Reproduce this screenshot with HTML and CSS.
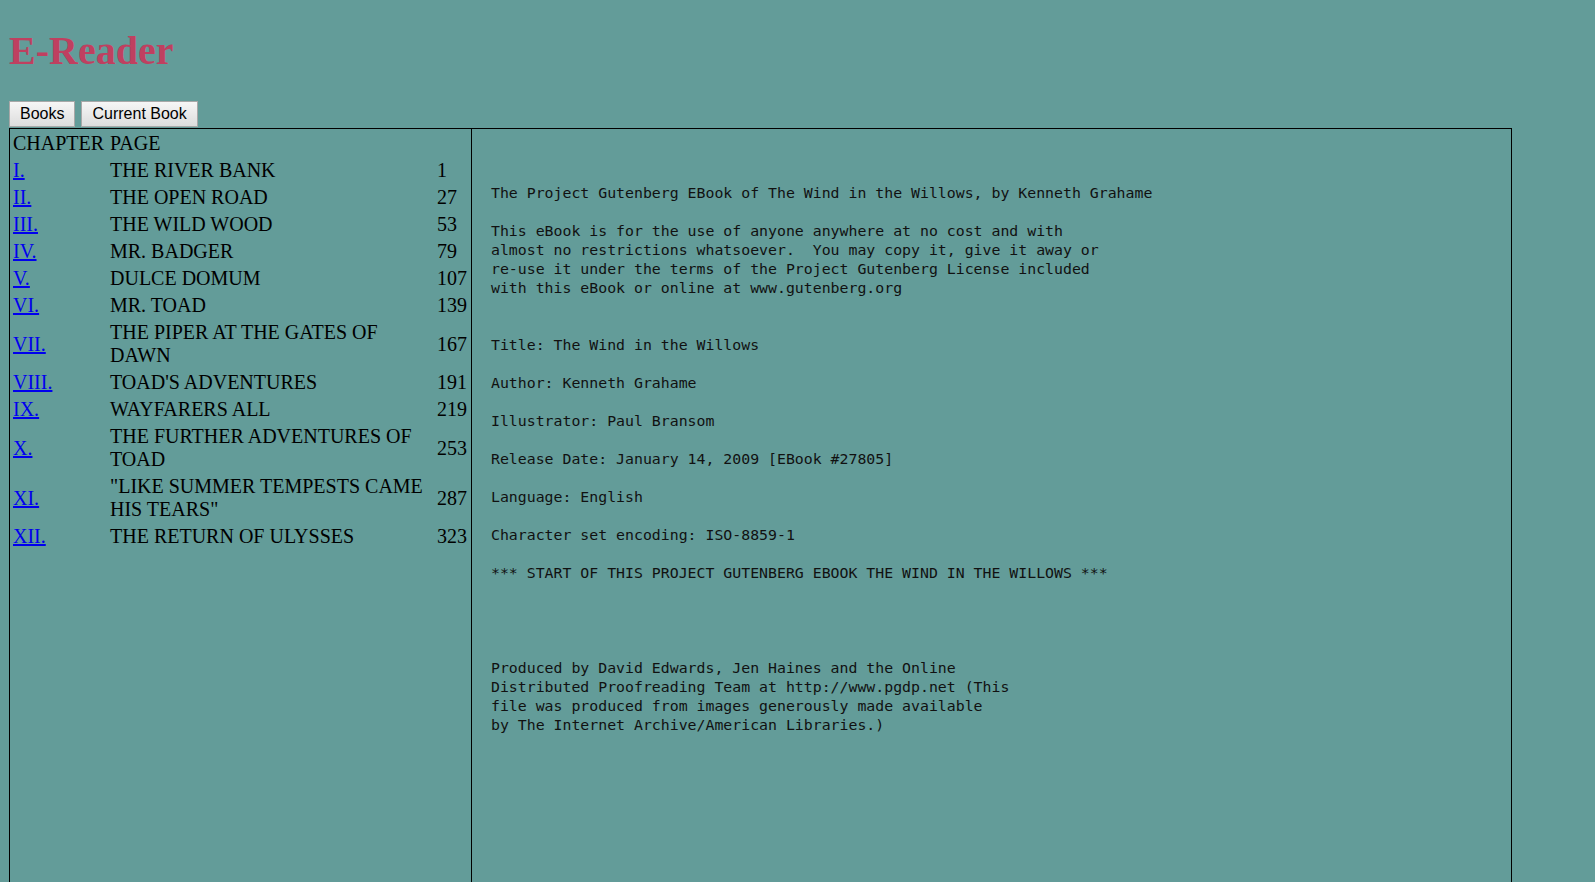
FILE: index.html
```html
<!DOCTYPE html>
<html>
<head>
<meta charset="utf-8">
<title>E-Reader</title>
<link rel="stylesheet" href="styles.css">
</head>
<body>
<h1 class="title">E-Reader</h1>
<div class="tabs"><button class="tab">Books</button><button class="tab">Current Book</button></div>
<div class="reader">
  <div class="toc">
    <table class="chapters">
      <colgroup><col class="c-num"><col class="c-title"><col class="c-page"></colgroup>
      <tr><td>CHAPTER</td><td>PAGE</td><td></td></tr>
      <tr><td><a href="#">I.</a></td><td>THE RIVER BANK</td><td>1</td></tr>
      <tr><td><a href="#">II.</a></td><td>THE OPEN ROAD</td><td>27</td></tr>
      <tr><td><a href="#">III.</a></td><td>THE WILD WOOD</td><td>53</td></tr>
      <tr><td><a href="#">IV.</a></td><td>MR. BADGER</td><td>79</td></tr>
      <tr><td><a href="#">V.</a></td><td>DULCE DOMUM</td><td>107</td></tr>
      <tr><td><a href="#">VI.</a></td><td>MR. TOAD</td><td>139</td></tr>
      <tr><td><a href="#">VII.</a></td><td>THE PIPER AT THE GATES OF DAWN</td><td>167</td></tr>
      <tr><td><a href="#">VIII.</a></td><td>TOAD'S ADVENTURES</td><td>191</td></tr>
      <tr><td><a href="#">IX.</a></td><td>WAYFARERS ALL</td><td>219</td></tr>
      <tr><td><a href="#">X.</a></td><td>THE FURTHER ADVENTURES OF TOAD</td><td>253</td></tr>
      <tr><td><a href="#">XI.</a></td><td>"LIKE SUMMER TEMPESTS CAME HIS TEARS"</td><td>287</td></tr>
      <tr><td><a href="#">XII.</a></td><td>THE RETURN OF ULYSSES</td><td>323</td></tr>
    </table>
  </div>
  <div class="content">
<pre class="text">The Project Gutenberg EBook of The Wind in the Willows, by Kenneth Grahame

This eBook is for the use of anyone anywhere at no cost and with
almost no restrictions whatsoever.  You may copy it, give it away or
re-use it under the terms of the Project Gutenberg License included
with this eBook or online at www.gutenberg.org


Title: The Wind in the Willows

Author: Kenneth Grahame

Illustrator: Paul Bransom

Release Date: January 14, 2009 [EBook #27805]

Language: English

Character set encoding: ISO-8859-1

*** START OF THIS PROJECT GUTENBERG EBOOK THE WIND IN THE WILLOWS ***




Produced by David Edwards, Jen Haines and the Online
Distributed Proofreading Team at http://www.pgdp.net (This
file was produced from images generously made available
by The Internet Archive/American Libraries.)</pre>
  </div>
</div>
</body>
</html>
```

FILE: styles.css
```css
html, body {
  background: #639c99;
}
body {
  margin: 0;
  padding: 0 9px;
  font-family: "Liberation Serif", "Times New Roman", serif;
  color: #000;
}
.title {
  margin: 28px 0 27px 0;
  font-size: 40px;
  line-height: 46px;
  font-weight: bold;
  color: #bf4060;
}
.tabs {
  display: flex;
  gap: 6px;
  height: 27px;
}
.tab {
  font-family: "Liberation Sans", Arial, sans-serif;
  font-size: 16px;
  line-height: 18px;
  height: 26px;
  padding: 0 10px;
  margin: 0;
  border: 1px solid #a8a8a8;
  background: linear-gradient(#f6f6f6, #dddddd);
  color: #000;
}
.reader {
  display: flex;
  width: 1501px;
  min-height: 800px;
  border: 1px solid #000;
}
.toc {
  width: 461px;
  border-right: 1px solid #000;
  flex: none;
}
.chapters {
  width: 100%;
  font-size: 20px;
  line-height: 23px;
  border-spacing: 2px;
}
.chapters td {
  padding: 1px;
  vertical-align: middle;
}
.c-num { width: 95px; }
.c-page { width: 33px; }
.chapters a {
  color: #0000ee;
}
.content {
  flex: 1;
  padding: 55px 19px 0 19px;
}
.text {
  margin: 0;
  font-family: "DejaVu Sans Mono", "Liberation Mono", monospace;
  font-size: 14.85px;
  line-height: 19px;
  color: #111;
}
```
